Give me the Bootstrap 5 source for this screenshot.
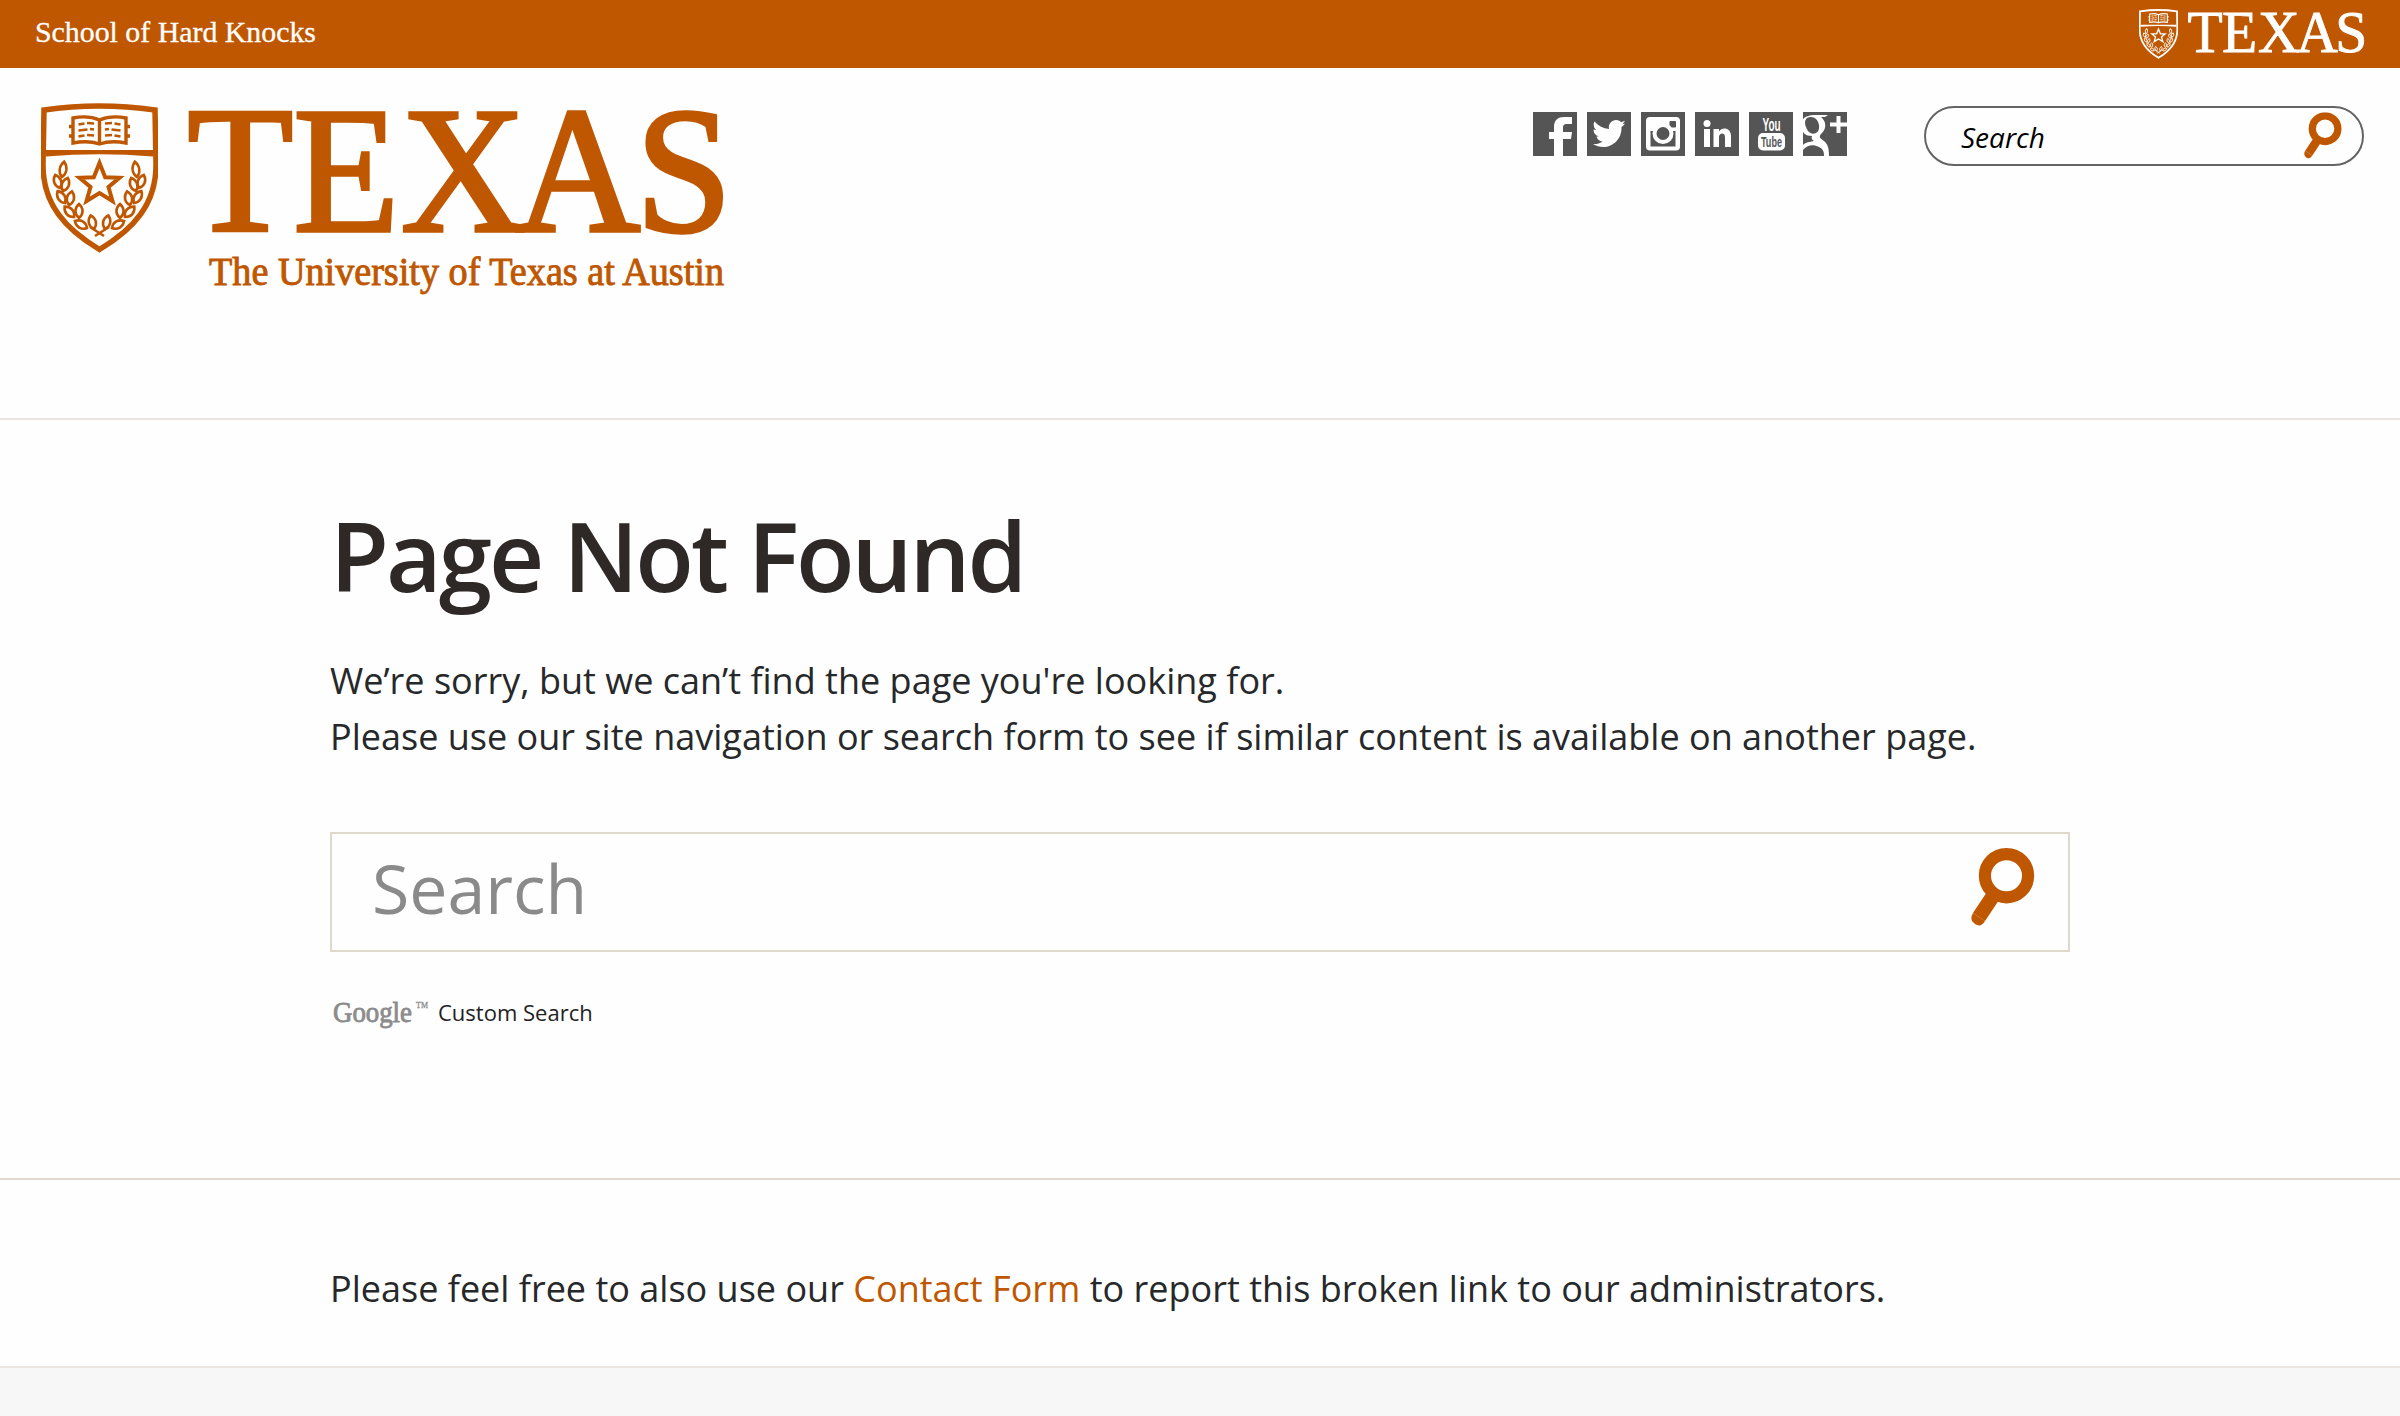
<!DOCTYPE html>
<html lang="en">
<head>
<meta charset="utf-8">
<title>Page Not Found | The University of Texas at Austin</title>
<link href="https://cdn.jsdelivr.net/npm/bootstrap@5.3.0/dist/css/bootstrap.min.css" rel="stylesheet">
<style>
:root{--burnt:#bf5700}
body{font-family:"Open Sans","Noto Sans",sans-serif;color:#262829;background:#fefefe;min-height:1416px}
.topbar{height:68px;background:var(--burnt);color:#fff;padding:0 30px 0 34px}
.masthead{height:352px;border-bottom:2px solid #e9e4e0;padding:35px 36px 0 40px}
.social{gap:10px;margin-top:9px;margin-right:77px}
.social svg{width:44px;height:44px;display:block}
.pill{width:440px;height:60px;border:2px solid #646464;border-radius:30px;margin-top:3px;padding:0 20px 0 35px}
.pill input,.bigsearch input{border:0;outline:0;background:transparent;min-width:0;padding:0}
.pill input{font-size:28px;font-style:italic;color:#000;width:300px;padding-top:2px}
.pill input::placeholder{color:#000;opacity:1}
.content{width:1740px;margin:0 auto}
.lost{height:760px;border-bottom:2px solid #ded9cc;padding-top:70px}
h1.title404{font-size:96px;font-weight:600;line-height:130px;color:#2e2926;letter-spacing:-3px;margin:0 0 33px}
.copy{font-size:36px;line-height:56px;margin:0;letter-spacing:.01px}
.bigsearch{height:120px;border:2px solid #ded9cc;padding:0 33px 0 40px;margin-top:67px}
.bigsearch input{font-size:68px;width:900px;height:116px;padding-bottom:10px}
.bigsearch svg{margin-bottom:8px}
.bigsearch input::placeholder{color:#8a8a8a;opacity:1}
.brandline{font-size:22px;line-height:30px;color:#222;margin-top:45px}
.brandline span{padding-bottom:8px}
.report{height:188px;border-bottom:2px solid #e9e6e0;padding-top:81px}
.report a{color:var(--burnt);font-weight:500;text-decoration:none}
.foot{background:#f7f7f7}
</style>
<script src="https://cdn.jsdelivr.net/npm/bootstrap@5.3.0/dist/js/bootstrap.bundle.min.js"></script>
</head>
<body class="d-flex flex-column">
<svg width="0" height="0" class="position-absolute" aria-hidden="true">
<defs>
<path id="leaf" d="M0 0C-5-4-4.500-10 0-14C4.500-10 5-4 0 0Z"/>
<g id="branch" fill="none" stroke="currentColor" stroke-width="2.600">
<use href="#leaf" transform="translate(21 74) rotate(8) scale(.95 1.100)"/>
<use href="#leaf" transform="translate(19 85) rotate(-20)"/>
<use href="#leaf" transform="translate(22 88) rotate(20)"/>
<use href="#leaf" transform="translate(24 100) rotate(-32)"/>
<use href="#leaf" transform="translate(28 102) rotate(12)"/>
<use href="#leaf" transform="translate(33 114) rotate(-42)"/>
<use href="#leaf" transform="translate(38 115) rotate(0)"/>
<use href="#leaf" transform="translate(46 125) rotate(-60)"/>
<use href="#leaf" transform="translate(53 126) rotate(-14)"/>
<path d="M49 124L63 133"/>
</g>
<symbol id="shield" viewBox="0 0 117 150">
<path fill="none" stroke="currentColor" stroke-width="5.500" d="M3 7Q58-1 114 7L115 62C115 101 93 126 58.500 146.500C24 126 2 101 2 62Z"/>
<path fill="currentColor" d="M5 47H112V53.500Q58 49 5 53.500Z"/>
<g fill="none" stroke="currentColor" stroke-width="3.400">
<path d="M58.500 17Q47 12 32 15V40Q47 37 58.500 41Q70 37 85 40V15Q70 12 58.500 17V41M28 23.500h4M28 33h4M85 23.500h4M85 33h4"/>
<path stroke-width="2.700" d="M37.500 21.500l6-1M46 20l7 .5M37.500 27.500l9-1M49 26l4 .5M37.500 33.500l6-1M46 32l7 .5M64 20.500l7-.5M73.500 20.500l6 1M64 26.500l4-.5M70.500 26.500l9 1M64 32.500l7-.5M73.500 32.500l6 1"/>
</g>
<path fill="none" stroke="currentColor" stroke-width="4" d="M58.500 60L64.200 74.300L78.500 74.800L67.500 84L71.500 98L58.500 90L45.500 98L49.500 84L38.500 74.800L52.800 74.300Z"/>
<use href="#branch"/><use href="#branch" transform="translate(117 0) scale(-1 1)"/>
</symbol>
<symbol id="magnifier" viewBox="0 0 64 80">
<circle cx="35.500" cy="27.700" r="21.600" fill="none" stroke="currentColor" stroke-width="12.200"/>
<path d="M24 45L8 69" stroke="currentColor" stroke-width="14.500"/>
<path d="M14 73Q10 80 4 76Q-2 72 2 65Z" fill="currentColor"/>
</symbol>
</defs>
</svg>

<div class="topbar d-flex align-items-center justify-content-between">
<svg width="300" height="68" aria-label="School of Hard Knocks"><text x="1" y="41.500" font-family="Liberation Serif,serif" font-size="28.500" fill="#fff" stroke="#fff" stroke-width=".3" textLength="281" lengthAdjust="spacingAndGlyphs">School of Hard Knocks</text></svg>
<svg width="233" height="68" viewBox="0 0 233 68" color="#fff" aria-label="Texas"><use href="#shield" x="2" y="9" width="39" height="50"/><text transform="scale(.96 1)" font-family="Liberation Serif,serif" font-size="60" fill="#fff" stroke="#fff" stroke-width=".9" y="52" x="52.500 88.500 126 166 206.500">TEXAS</text></svg>
</div>

<header class="masthead d-flex align-items-start justify-content-between">
<svg width="700" height="210" viewBox="40 103 700 210" color="#bf5700" aria-label="Texas, The University of Texas at Austin">
<use href="#shield" x="41" y="103" width="117" height="150"/>
<g fill="#bf5700" stroke="#bf5700" font-family="Liberation Serif,serif">
<text transform="scale(.96 1)" font-size="181" stroke-width="3.500" y="231.500" x="195 305.500 417.500 536.500 662">TEXAS</text>
<text font-size="39" stroke-width=".9" x="209" y="285" textLength="515" lengthAdjust="spacingAndGlyphs">The University of Texas at Austin</text>
</g>
</svg>
<div class="d-flex align-items-start">
<div class="social d-flex">
<svg viewBox="0 0 44 44"><path fill="#555" d="M0 0h44v44H0z"/><path fill="#fff" d="M21 44V27h-5v-7h5v-5C21 8 25 5 31 5h8v7h-5c-3 0-4 1-4 4v4h9l-1 7h-8v17z"/></svg>
<svg viewBox="0 0 44 44"><path fill="#555" d="M0 0h44v44H0z"/><path fill="#fff" d="M38 11.500a14 14 0 0 1-3.500 3.500C35 27 26 35 16.500 35c-4 0-7.500-1-10.500-3 4 .4 7.500-.8 9.500-2.500-3.500-.3-5.500-2.500-6-5h2.500C8.500 23.500 6.500 21 6.500 17.500l3 .8C6.500 16 6 12 7.500 9.500c4 4.500 8.500 7 14.500 7.500C21 11.500 25 8 29 8c2 0 4 .8 5 2.200l4-1.500-2.500 3.500z"/></svg>
<svg viewBox="0 0 44 44"><path fill="#555" d="M0 0h44v44H0z"/><rect x="5" y="5" width="34" height="33.500" rx="4" fill="#fff"/><path fill="#555" d="M9.500 19h25v15.500h-25z"/><rect x="28.500" y="9" width="6.500" height="6.500" rx="1" fill="#555"/><circle cx="22" cy="21.500" r="8.500" fill="#555" stroke="#fff" stroke-width="4"/></svg>
<svg viewBox="0 0 44 44"><path fill="#555" d="M0 0h44v44H0z"/><circle cx="12" cy="11.500" r="3.500" fill="#fff"/><path fill="#fff" d="M9 17h6v18H9zM18.500 17h5.500v2.500c3-5 12-4 12 4.500v11h-6V25c0-5-6-4.500-6 0v10h-5.500z"/></svg>
<svg viewBox="0 0 44 44"><path fill="#555" d="M0 0h44v44H0z"/><text x="13.500" y="19" font-family="Liberation Sans" font-weight="700" font-size="19" fill="#fff" textLength="18" lengthAdjust="spacingAndGlyphs">You</text><rect x="9" y="21" width="27" height="17.500" rx="5" fill="#fff"/><text x="12" y="35" font-family="Liberation Sans" font-weight="700" font-size="15.500" fill="#555" textLength="21" lengthAdjust="spacingAndGlyphs">Tube</text></svg>
<svg viewBox="0 0 44 44"><path fill="#555" d="M0 0h44v44H0z"/><path fill="#fff" fill-rule="evenodd" d="M0 7C3 4 7 3 11 3h14l-3 2h-4c5 4 6 11 1 16-4 4-2 5 2 8 4 3 5 8 5 15h-5c0-5-1-7-5-9-6-3-12-2-16 3V33c3-3 6-3 11-4-2-1-3-3-2-5-4 0-7-1-9-4zM8 5C2 5 1 10 3 15c2 6 6 8 10 6 6-3 3-16-5-16zM33.500 4h4v6.500H44v4h-6.500V21h-4v-6.500H27v-4h6.500z"/></svg>
</div>
<form class="pill d-flex align-items-center justify-content-between"><input type="text" placeholder="Search" aria-label="Search"><svg width="38" height="48" viewBox="0 0 64 80" color="#bf5700"><use href="#magnifier"/></svg></form>
</div>
</header>

<main class="lost">
<div class="content">
<h1 class="title404">Page Not Found</h1>
<p class="copy">We’re sorry, but we can’t find the page you're looking for.<br>Please use our site navigation or search form to see if similar content is available on another page.</p>
<form class="bigsearch d-flex align-items-center justify-content-between"><input type="text" placeholder="Search" aria-label="Site search"><svg width="64" height="80" viewBox="0 0 64 80" color="#bf5700"><use href="#magnifier"/></svg></form>
<div class="brandline d-flex align-items-start"><svg width="108" height="36"><g font-family="Liberation Serif,serif" fill="#8c8c8c" stroke="#8c8c8c" stroke-width=".9"><text x="3" y="25" font-size="30" textLength="79" lengthAdjust="spacingAndGlyphs">Google</text><text x="86" y="11" font-size="9" stroke-width=".3" textLength="12" lengthAdjust="spacingAndGlyphs">TM</text></g></svg><span>Custom Search</span></div>
</div>
</main>
<section class="report">
<div class="content"><p class="copy">Please feel free to also use our <a href="#">Contact Form</a> to report this broken link to our administrators.</p></div>
</section>
<footer class="foot flex-grow-1"></footer>
</body>
</html>
